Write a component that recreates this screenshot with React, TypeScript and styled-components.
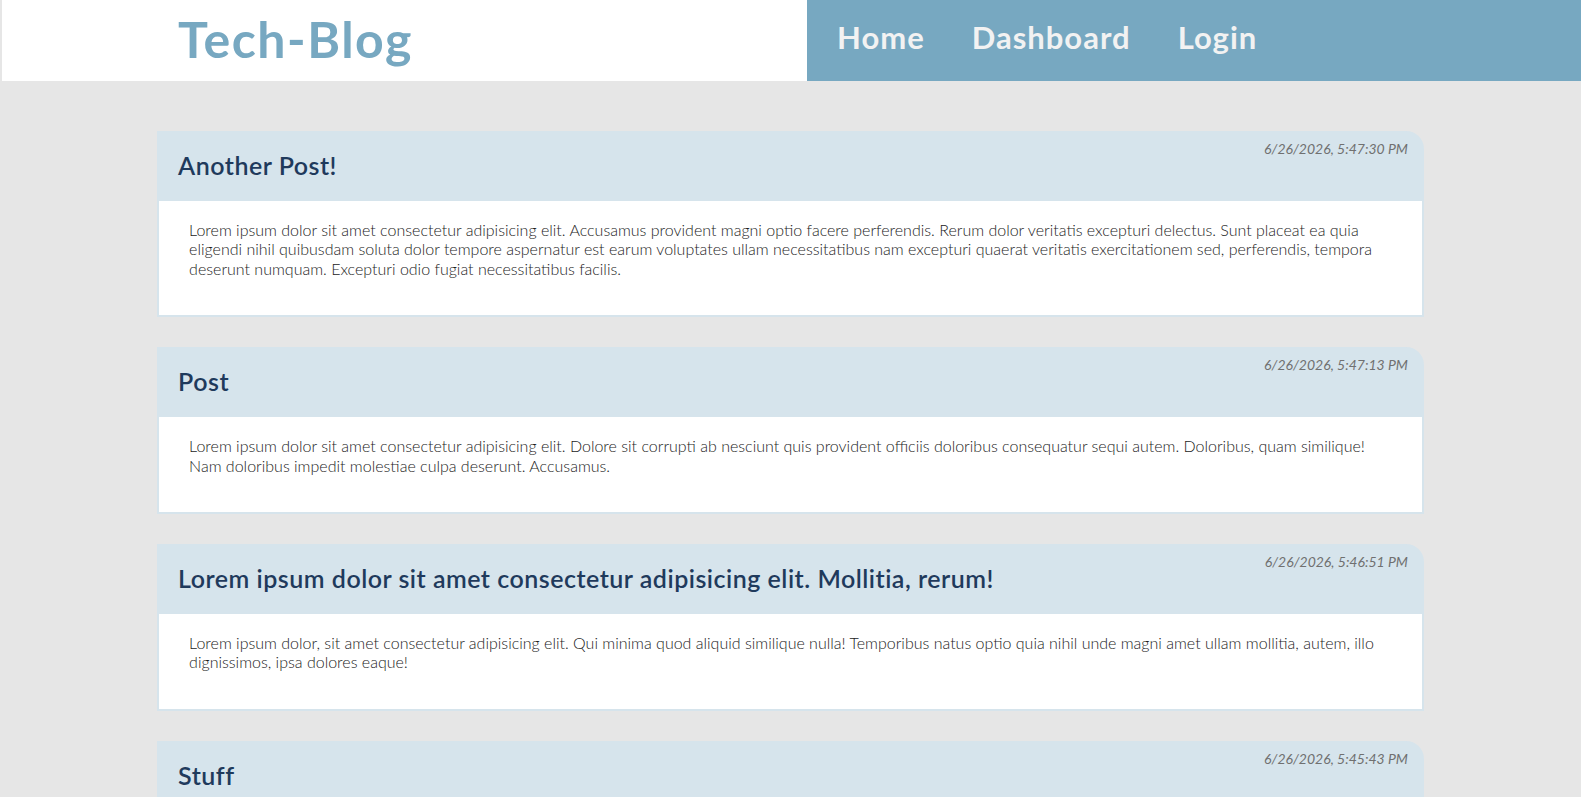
import { FC } from "react";
import styled, { createGlobalStyle } from "styled-components";

const GlobalStyle = createGlobalStyle`
  body {
    margin: 0;
    background: #e6e6e6;
    font-family: "Lato", "Liberation Sans", sans-serif;
  }
`;

interface IPost {
  id: number;
  title: string;
  date: string;
  body: string;
}

const posts: IPost[] = [
  {
    id: 1,
    title: "Another Post!",
    date: "6/26/2026, 5:47:30 PM",
    body: "Lorem ipsum dolor sit amet consectetur adipisicing elit. Accusamus provident magni optio facere perferendis. Rerum dolor veritatis excepturi delectus. Sunt placeat ea quia eligendi nihil quibusdam soluta dolor tempore aspernatur est earum voluptates ullam necessitatibus nam excepturi quaerat veritatis exercitationem sed, perferendis, tempora deserunt numquam. Excepturi odio fugiat necessitatibus facilis.",
  },
  {
    id: 2,
    title: "Post",
    date: "6/26/2026, 5:47:13 PM",
    body: "Lorem ipsum dolor sit amet consectetur adipisicing elit. Dolore sit corrupti ab nesciunt quis provident officiis doloribus consequatur sequi autem. Doloribus, quam similique! Nam doloribus impedit molestiae culpa deserunt. Accusamus.",
  },
  {
    id: 3,
    title: "Lorem ipsum dolor sit amet consectetur adipisicing elit. Mollitia, rerum!",
    date: "6/26/2026, 5:46:51 PM",
    body: "Lorem ipsum dolor, sit amet consectetur adipisicing elit. Qui minima quod aliquid similique nulla! Temporibus natus optio quia nihil unde magni amet ullam mollitia, autem, illo dignissimos, ipsa dolores eaque!",
  },
  {
    id: 4,
    title: "Stuff",
    date: "6/26/2026, 5:45:43 PM",
    body: "Lorem ipsum dolor sit amet consectetur adipisicing elit. Quas, voluptate.",
  },
];

const App: FC = () => {
  return (
    <>
      <GlobalStyle />
      <Header>
        <Brand>
          <Logo>Tech-Blog</Logo>
        </Brand>
        <Nav>
          <NavLink href="#">Home</NavLink>
          <NavLink href="#">Dashboard</NavLink>
          <NavLink href="#">Login</NavLink>
        </Nav>
      </Header>
      <Main>
        {posts.map((post) => (
          <Card key={post.id}>
            <CardHeader>
              <PostTitle>{post.title}</PostTitle>
              <PostDate>{post.date}</PostDate>
            </CardHeader>
            <CardBody>
              <PostText>{post.body}</PostText>
            </CardBody>
          </Card>
        ))}
      </Main>
    </>
  );
};
export default App;

const Header = styled.header`
  display: flex;
  height: 81px;
  margin-left: 2px;
`;

const Brand = styled.div`
  flex: 0 0 805px;
  background: #ffffff;
  display: flex;
  align-items: center;
  padding-left: 176px;
  box-sizing: border-box;
`;

const Logo = styled.h1`
  margin: 0 0 4px;
  font-family: "Lato", sans-serif;
  font-size: 50px;
  font-weight: 700;
  color: #77a8c1;
  letter-spacing: 1.5px;
`;

const Nav = styled.nav`
  flex: 1;
  background: #77a8c1;
  display: flex;
  align-items: center;
  gap: 47px;
  padding: 0 0 8px 30px;
`;

const NavLink = styled.a`
  font-family: "Lato", sans-serif;
  font-size: 31px;
  font-weight: 700;
  letter-spacing: 1px;
  color: #f2f2f2;
  text-decoration: none;
`;

const Main = styled.main`
  display: flex;
  flex-direction: column;
  gap: 30px;
  width: calc(80% + 2px);
  margin: 50px auto;
`;

const Card = styled.article`
  display: flex;
  flex-direction: column;
`;

const CardHeader = styled.div`
  display: flex;
  justify-content: space-between;
  align-items: flex-start;
  height: 70px;
  box-sizing: border-box;
  padding: 0 16px 0 21px;
  background: #d6e4ec;
  border-top-right-radius: 18px;
`;

const PostTitle = styled.h2`
  margin: 20px 0 0;
  font-family: "Lato", sans-serif;
  font-size: 25px;
  font-weight: 600;
  letter-spacing: 0.5px;
  line-height: 29px;
  color: #1f3a5c;
`;

const PostDate = styled.span`
  margin-top: 9px;
  font-size: 14px;
  line-height: 17px;
  font-style: italic;
  color: #707070;
  white-space: nowrap;
`;

const CardBody = styled.div`
  background: #ffffff;
  border: 2px solid #d6e4ec;
  border-top: none;
  padding: 19px 22px 37px 30px;
`;

const PostText = styled.p`
  margin: 0;
  font-size: 16px;
  font-weight: 300;
  line-height: 19.4px;
  color: #1c1c1c;
`;
